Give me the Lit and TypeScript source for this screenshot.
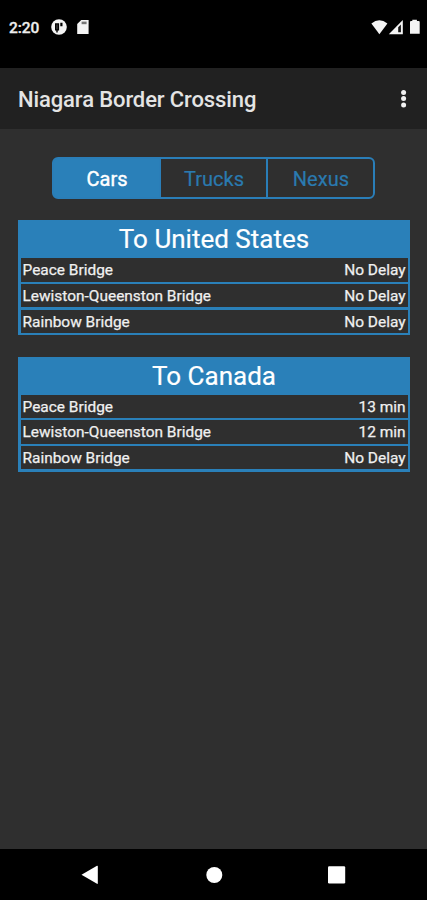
import { LitElement, html, css } from "lit";
import { customElement, property, state } from "lit/decorators.js";

interface Crossing {
  bridge: string;
  wait: string;
}

@customElement("status-bar")
class StatusBar extends LitElement {
  static styles = css`
    :host {
      display: flex;
      box-sizing: border-box;
      height: 68px;
      padding: 18px 7px 0 9px;
      background: #000;
      color: #fff;
    }
    .time {
      width: 42px;
      font-size: 15.5px;
      line-height: 20px;
      font-weight: 500;
      letter-spacing: -0.1px;
      color: #eee;
      -webkit-text-stroke: 0.3px #eee;
    }
    svg {
      display: block;
      height: 20px;
      fill: #f4f4f4;
    }
    .gap {
      flex: 1;
    }
  `;
  render() {
    return html`
      <div class="time">2:20</div>
      <svg width="40" height="20" viewBox="51 18 40 20">
        <circle cx="59" cy="27" r="7.8" />
        <path d="M55 23.2h4.1v7.2h-1.4v2.2h-1.4v-2.2H55zM60.3 22.8h2.2v3.5h-2.2z" fill="#000" />
        <path d="M56.5 24.6h1v4.6h-1z" fill="#555" />
        <path d="M81.3 20H88.6V34H77.2V24z" />
        <path d="M81.6 21.6h5v2.6h-5z" fill="#777" />
      </svg>
      <div class="gap"></div>
      <svg width="50" height="20" viewBox="370 18 50 20">
        <path d="M371.4 23.4Q379.4 17 387.4 23.4L379.4 34.2z" />
        <path d="M402.8 20V34.2H388.8z" />
        <path d="M400.9 24.6V32.2H398.2V27.3z" fill="#111" />
        <path d="M412.3 19.8h4.6v1.2h1.8q1 0 1 1V33.8H410V22q0-1 1-1h1.3z" />
      </svg>
    `;
  }
}

@customElement("app-bar")
class AppBar extends LitElement {
  static styles = css`
    :host {
      display: flex;
      align-items: center;
      justify-content: space-between;
      box-sizing: border-box;
      height: 61px;
      padding: 3px 19px 0 18px;
      background: #212121;
    }
    .title {
      font-size: 22px;
      letter-spacing: -0.11px;
      line-height: 28px;
      font-weight: 500;
      color: #e4e4e4;
      white-space: nowrap;
    }
    svg {
      display: block;
      fill: #f2f2f2;
    }
  `;
  render() {
    return html`
      <div class="title">Niagara Border Crossing</div>
      <svg width="9" height="20" viewBox="0 0 9 20">
        <circle cx="4.6" cy="2.5" r="2.5" />
        <circle cx="4.6" cy="8.5" r="2.5" />
        <circle cx="4.6" cy="14.9" r="2.5" />
      </svg>
    `;
  }
}

@customElement("vehicle-tabs")
class VehicleTabs extends LitElement {
  @state() selected = "Cars";
  static styles = css`
    :host {
      display: flex;
      box-sizing: border-box;
      width: 323px;
      height: 42px;
      border: 2px solid #2a7eb8;
      border-radius: 6px;
      background: #2a7eb8;
      gap: 2px;
      overflow: hidden;
    }
    .tab {
      flex: 1;
      padding-left: 1px;
      background: #2f2f2f;
      color: #2a7ab0;
      text-align: center;
      font-size: 20px;
      line-height: 40px;
      letter-spacing: 0.05px;
      -webkit-text-stroke: 0.2px #2a7ab0;
      cursor: pointer;
    }
    .tab.on {
      background: #2a80b9;
      color: #fff;
      -webkit-text-stroke: 0.4px #fff;
    }
  `;
  render() {
    return ["Cars", "Trucks", "Nexus"].map(
      (name) => html`<div
        class=${name === this.selected ? "tab on" : "tab"}
        @click=${() => (this.selected = name)}
      >${name}</div>`
    );
  }
}

@customElement("wait-table")
class WaitTable extends LitElement {
  @property() heading = "";
  @property({ attribute: false }) rows: Crossing[] = [];
  static styles = css`
    :host {
      display: flex;
      flex-direction: column;
      box-sizing: border-box;
      height: 115px;
      padding-bottom: 2.6px;
      background: #2a80b9;
    }
    .heading {
      height: 38px;
      line-height: 38px;
      font-size: 26px;
      text-align: center;
      color: #fff;
      -webkit-text-stroke: 0.2px #fff;
    }
    .rows {
      flex: 1;
      min-height: 0;
      display: flex;
      flex-direction: column;
      gap: 2.4px;
      padding: 0 2.5px;
    }
    .row {
      flex: 1;
      display: flex;
      justify-content: space-between;
      padding: 0 2px;
      background: #2f2f2f;
      color: #f0f0f0;
      font-size: 15.45px;
      line-height: 24.4px;
      -webkit-text-stroke: 0.25px #f0f0f0;
      min-height: 0;
    }
  `;
  render() {
    return html`
      <div class="heading">${this.heading}</div>
      <div class="rows">
        ${this.rows.map(
          (r) => html`<div class="row"><span>${r.bridge}</span><span>${r.wait}</span></div>`
        )}
      </div>
    `;
  }
}

@customElement("nav-bar")
class NavBar extends LitElement {
  static styles = css`
    :host {
      display: flex;
      align-items: center;
      justify-content: space-between;
      box-sizing: border-box;
      height: 51px;
      padding: 0 81px;
      background: #000;
    }
    svg {
      display: block;
      fill: #fff;
    }
  `;
  render() {
    return html`
      <svg width="18" height="20" viewBox="0 0 18 20"><path d="M.5 9.8 16 .8q.8-.3.8.6v16.8q0 .9-.8.6z" /></svg>
      <svg width="18" height="20" viewBox="0 0 18 20"><circle cx="9.3" cy="10" r="8" /></svg>
      <svg width="18" height="20" viewBox="0 0 18 20"><rect x="0" y="1.2" width="17.2" height="17.2" rx="1.2" /></svg>
    `;
  }
}

@customElement("app-root")
class AppRoot extends LitElement {
  static styles = css`
    :host {
      display: flex;
      flex-direction: column;
      height: 900px;
      overflow: hidden;
      background: #2f2f2f;
      font-family: Roboto, "Liberation Sans", sans-serif;
    }
    .content {
      flex: 1;
      display: flex;
      flex-direction: column;
      gap: 21.4px;
      padding: 28px 17px 0 18px;
    }
    vehicle-tabs {
      margin-left: 34px;
    }
  `;
  render() {
    return html`
      <status-bar></status-bar>
      <app-bar></app-bar>
      <div class="content">
        <vehicle-tabs></vehicle-tabs>
        <wait-table
          heading="To United States"
          .rows=${[
            { bridge: "Peace Bridge", wait: "No Delay" },
            { bridge: "Lewiston-Queenston Bridge", wait: "No Delay" },
            { bridge: "Rainbow Bridge", wait: "No Delay" },
          ]}
        ></wait-table>
        <wait-table
          heading="To Canada"
          .rows=${[
            { bridge: "Peace Bridge", wait: "13 min" },
            { bridge: "Lewiston-Queenston Bridge", wait: "12 min" },
            { bridge: "Rainbow Bridge", wait: "No Delay" },
          ]}
        ></wait-table>
      </div>
      <nav-bar></nav-bar>
    `;
  }
}
